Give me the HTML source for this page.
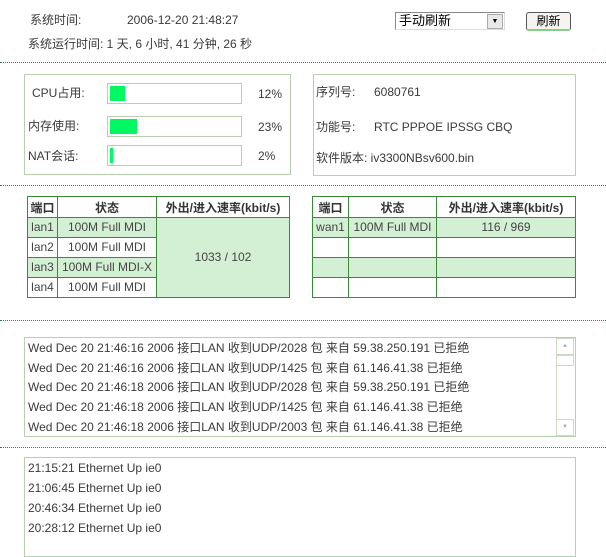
<!DOCTYPE html>
<html><head><meta charset="utf-8"><style>
body{margin:0;width:606px;height:539px;background:#fff;position:relative;overflow:hidden;font-family:"Liberation Sans","Noto Sans CJK SC",sans-serif;font-size:12px;color:#3a3a3a}
.a{position:absolute;white-space:nowrap;line-height:14px}
.dot{position:absolute;left:0;width:606px;border-top:1px dotted #3c7a3c;height:0}
.box{position:absolute;border:1px solid #b8d0b0;box-sizing:border-box}
.bar{position:absolute;left:107px;width:135px;height:21px;border:1px solid #b8d0b0;box-sizing:border-box}
.bar i{position:absolute;left:2px;top:2px;height:15px;background:#00f860}
table{position:absolute;border-collapse:collapse;font-size:12px;color:#444;table-layout:fixed}
td{border:1px solid #3a8a3a;padding:0;text-align:center;height:19px;line-height:19px;white-space:nowrap;overflow:hidden}
th{border:1px solid #3a8a3a;height:20px;padding:0;font-weight:bold;color:#333;white-space:nowrap;overflow:hidden}
.g{background:#d4f0d4}
</style></head><body>
<div class="a" style="left:30px;top:13px">系统时间:</div>
<div class="a" style="left:127px;top:13px">2006-12-20 21:48:27</div>
<div class="a" style="left:28px;top:37px">系统运行时间: 1 天, 6 小时, 41 分钟, 26 秒</div>
<div style="position:absolute;left:395px;top:12px;width:110px;height:18px;border:1px solid #888;border-right-color:#ddd;border-bottom-color:#ddd;box-sizing:border-box;font-size:13px;color:#000;line-height:16px;padding-left:3px">手动刷新
<div style="position:absolute;right:1px;top:1px;width:16px;height:15px;background:#e8e8e8;border:1px solid #aaa;box-sizing:border-box;font-size:7px;line-height:13px;text-align:center">▼</div></div>
<div style="position:absolute;left:526px;top:12px;width:45px;height:19px;border:1px solid #555;border-radius:3px;box-sizing:border-box;background:#f4f4f0;border-bottom:2px solid #8c8;text-align:center;line-height:16px;color:#000">刷新</div>
<div class="dot" style="top:62px"></div>

<div class="box" style="left:24px;top:74px;width:267px;height:101px"></div>
<div class="a" style="left:32px;top:86px">CPU占用:</div>
<div class="bar" style="top:83px"><i style="width:15px"></i></div>
<div class="a" style="left:258px;top:87px">12%</div>
<div class="a" style="left:28px;top:119px">内存使用:</div>
<div class="bar" style="top:116px"><i style="width:27px"></i></div>
<div class="a" style="left:258px;top:120px">23%</div>
<div class="a" style="left:28px;top:149px">NAT会话:</div>
<div class="bar" style="top:145px"><i style="width:3px"></i></div>
<div class="a" style="left:258px;top:149px">2%</div>

<div class="box" style="left:313px;top:74px;width:263px;height:102px"></div>
<div class="a" style="left:316px;top:85px">序列号:</div>
<div class="a" style="left:374px;top:85px">6080761</div>
<div class="a" style="left:316px;top:120px">功能号:</div>
<div class="a" style="left:374px;top:120px">RTC PPPOE IPSSG CBQ</div>
<div class="a" style="left:316px;top:151px">软件版本: iv3300NBsv600.bin</div>
<div class="dot" style="top:185px"></div>

<table style="left:27px;top:196px;width:263px">
<colgroup><col style="width:30px"><col style="width:99px"><col></colgroup>
<tr><th>端口</th><th>状态</th><th>外出/进入速率(kbit/s)</th></tr>
<tr class="g"><td>lan1</td><td>100M Full MDI</td><td rowspan="4" class="g">1033 / 102</td></tr>
<tr><td>lan2</td><td>100M Full MDI</td></tr>
<tr class="g"><td>lan3</td><td>100M Full MDI-X</td></tr>
<tr><td>lan4</td><td>100M Full MDI</td></tr>
</table>
<table style="left:312px;top:196px;width:264px">
<colgroup><col style="width:36px"><col style="width:88px"><col></colgroup>
<tr><th>端口</th><th>状态</th><th>外出/进入速率(kbit/s)</th></tr>
<tr class="g"><td>wan1</td><td>100M Full MDI</td><td>116 / 969</td></tr>
<tr><td></td><td></td><td></td></tr>
<tr class="g"><td></td><td></td><td></td></tr>
<tr><td></td><td></td><td></td></tr>
</table>
<div class="dot" style="top:320px"></div>

<div class="box" style="left:24px;top:337px;width:552px;height:100px"></div>
<div style="position:absolute;left:556px;top:338px;width:18px;height:98px;border-left:1px solid #c8dcc0"></div>
<div style="position:absolute;left:556px;top:338px;width:18px;height:17px;border:1px solid #c8dcc0;box-sizing:border-box;font-size:6px;color:#aaa;text-align:center;line-height:15px">▲</div>
<div style="position:absolute;left:556px;top:355px;width:18px;height:11px;border:1px solid #c8dcc0;box-sizing:border-box"></div>
<div style="position:absolute;left:556px;top:419px;width:18px;height:17px;border:1px solid #c8dcc0;box-sizing:border-box;font-size:6px;color:#aaa;text-align:center;line-height:15px">▼</div>
<div class="a" style="left:28px;top:341px">Wed Dec 20 21:46:16 2006 接口LAN 收到UDP/2028 包 来自 59.38.250.191 已拒绝</div>
<div class="a" style="left:28px;top:361px">Wed Dec 20 21:46:16 2006 接口LAN 收到UDP/1425 包 来自 61.146.41.38 已拒绝</div>
<div class="a" style="left:28px;top:380px">Wed Dec 20 21:46:18 2006 接口LAN 收到UDP/2028 包 来自 59.38.250.191 已拒绝</div>
<div class="a" style="left:28px;top:400px">Wed Dec 20 21:46:18 2006 接口LAN 收到UDP/1425 包 来自 61.146.41.38 已拒绝</div>
<div class="a" style="left:28px;top:420px">Wed Dec 20 21:46:18 2006 接口LAN 收到UDP/2003 包 来自 61.146.41.38 已拒绝</div>
<div class="dot" style="top:447px"></div>

<div class="box" style="left:24px;top:457px;width:552px;height:100px"></div>
<div class="a" style="left:28px;top:461px">21:15:21 Ethernet Up ie0</div>
<div class="a" style="left:28px;top:481px">21:06:45 Ethernet Up ie0</div>
<div class="a" style="left:28px;top:501px">20:46:34 Ethernet Up ie0</div>
<div class="a" style="left:28px;top:521px">20:28:12 Ethernet Up ie0</div>
</body></html>
